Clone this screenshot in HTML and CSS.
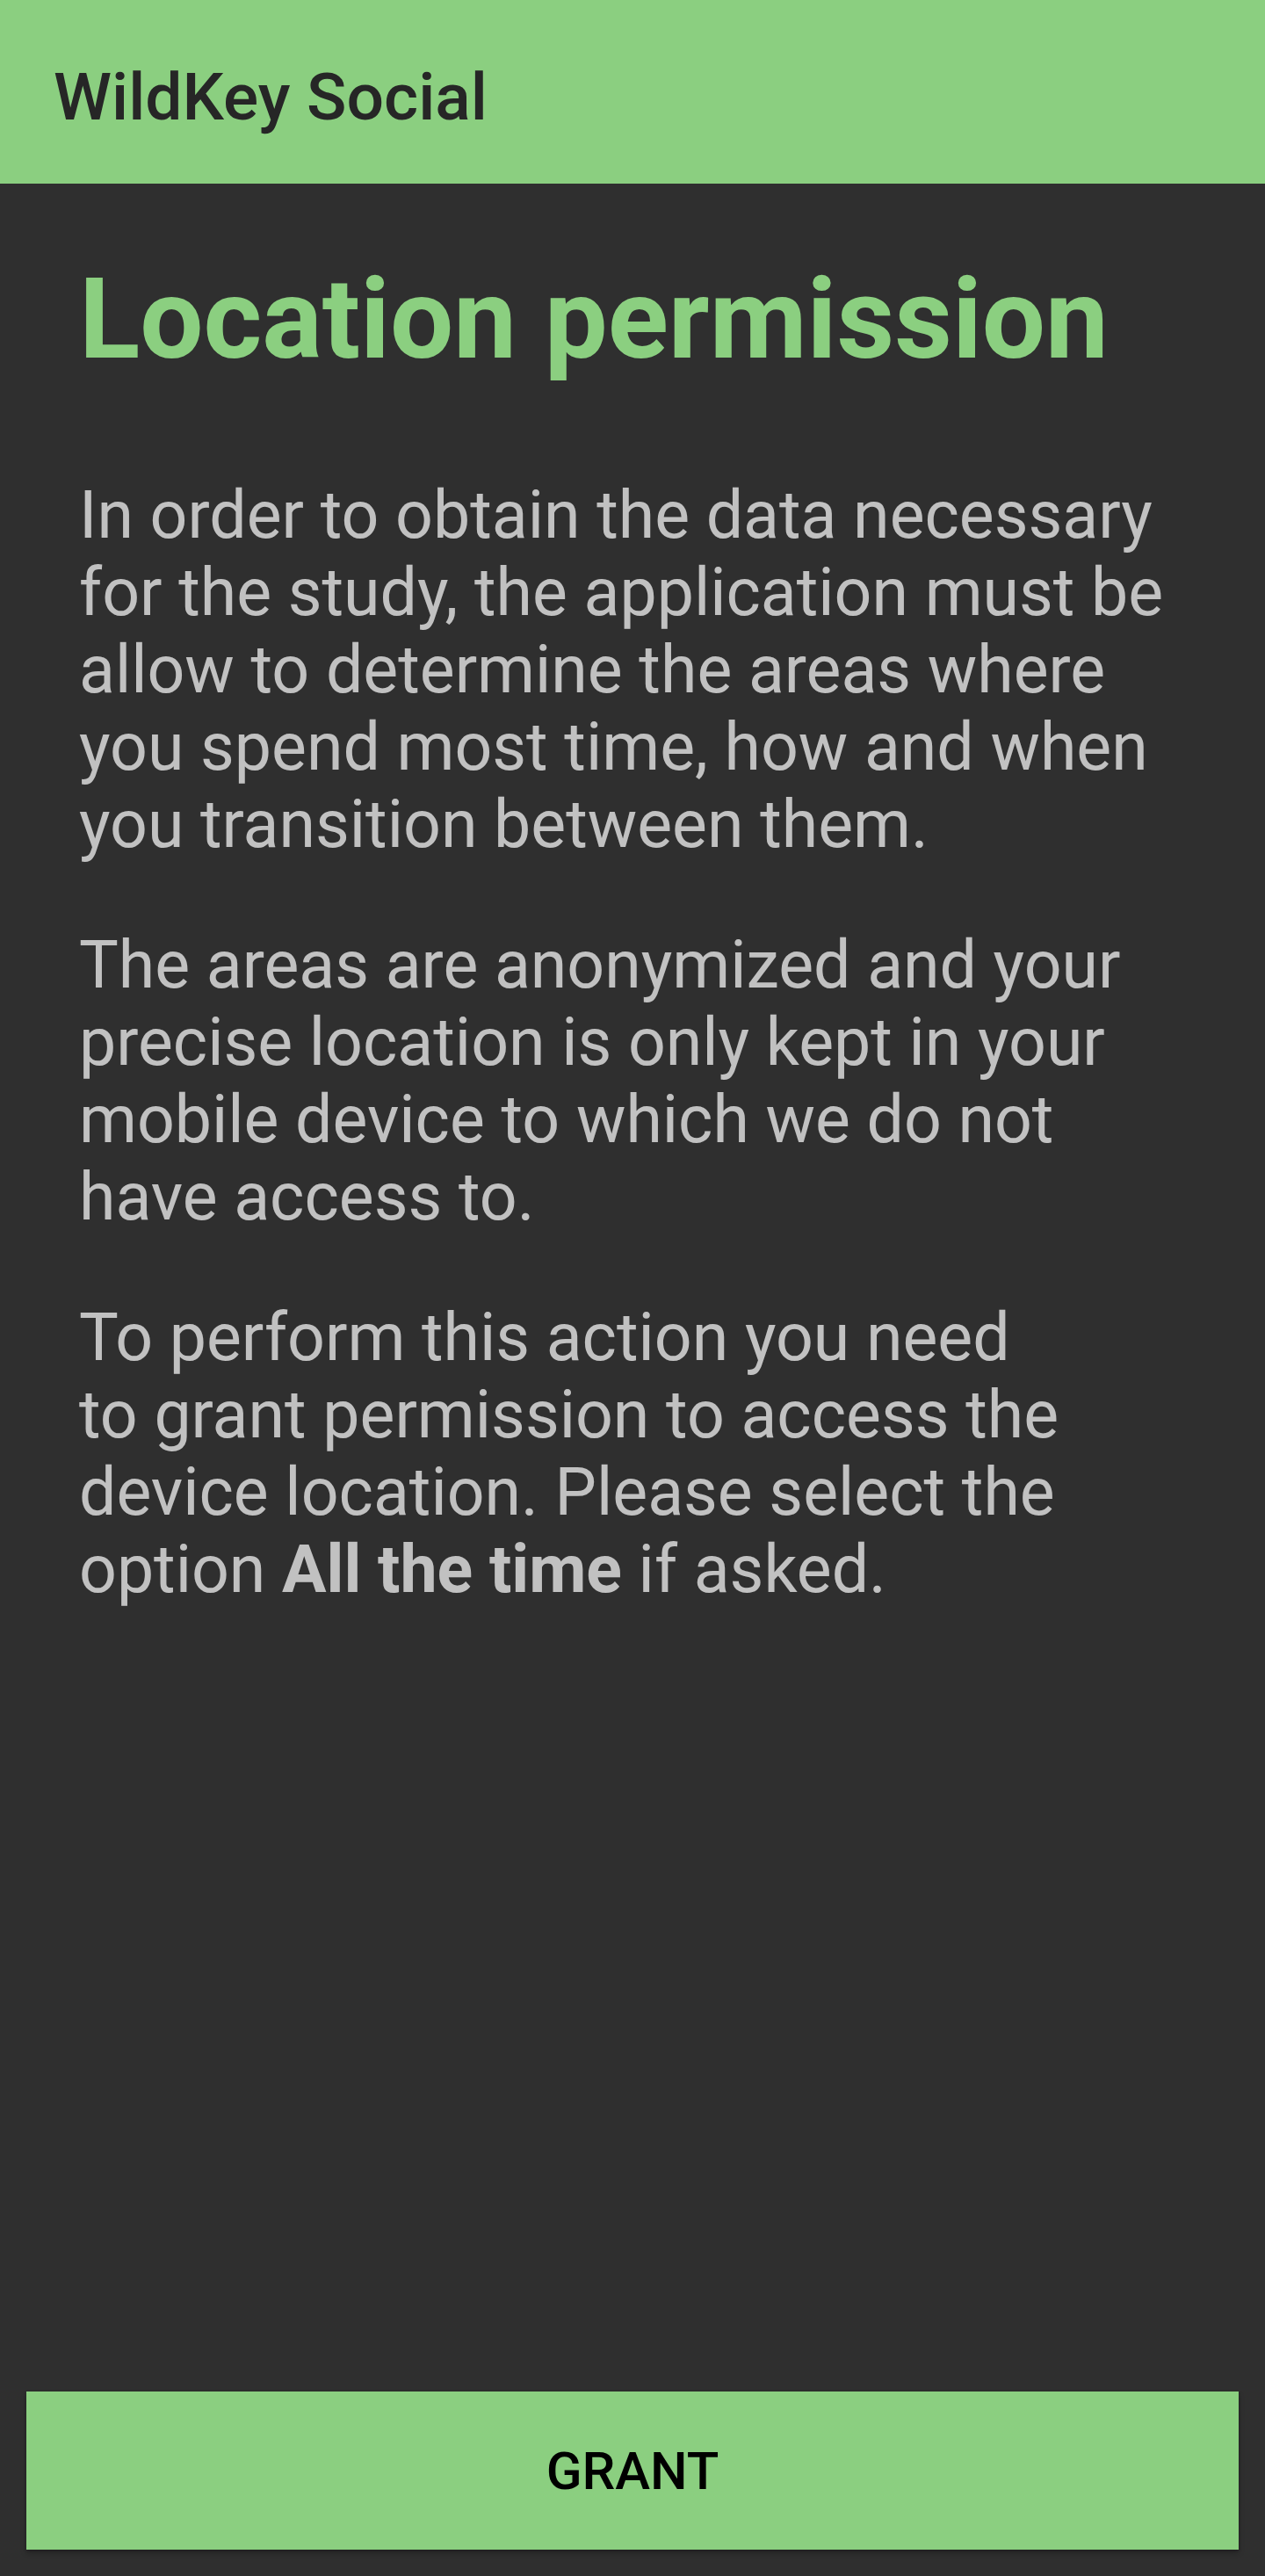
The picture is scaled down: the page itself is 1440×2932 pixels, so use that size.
FILE: index.html
```html
<!DOCTYPE html>
<html lang="en">
<head>
<meta charset="utf-8">
<title>WildKey Social</title>
<link rel="stylesheet" href="styles.css">
</head>
<body>
<div class="screen">
  <header class="toolbar">
    <h1 class="toolbar-title">WildKey Social</h1>
  </header>
  <main class="content">
    <h2 class="headline">Location permission</h2>
    <p class="para">In order to obtain the data necessary for the study, the application must be allow to determine the areas where you spend most time, how and when you transition between them.</p>
    <p class="para">The areas are anonymized and your precise location is only kept in your mobile device to which we do not have access to.</p>
    <p class="para">To perform this action you need<br>to grant permission to access the device location. Please select the option <strong>All the time</strong> if asked.</p>
  </main>
  <div class="footer">
    <button class="grant-btn" type="button">GRANT</button>
  </div>
</div>
</body>
</html>
```

FILE: styles.css
```css
* {
  box-sizing: border-box;
}

html, body {
  margin: 0;
  padding: 0;
  background: #2f2f2f;
}

body {
  font-family: Roboto, "Liberation Sans", sans-serif;
}

.screen {
  min-height: 100vh;
  display: flex;
  flex-direction: column;
  background: #2f2f2f;
}

.toolbar {
  height: 209px;
  background: #8bcf80;
  display: flex;
  align-items: center;
  padding: 10px 0 0 61px;
}

.toolbar-title {
  margin: 0;
  font-size: 75px;
  font-weight: 500;
  line-height: normal;
  color: #262626;
}

.content {
  flex: 1;
  padding: 79px 90px 0 90px;
}

.headline {
  margin: 0 0 104px 0;
  font-size: 128px;
  font-weight: 700;
  line-height: normal;
  color: #8bcf80;
}

.para {
  margin: 0 0 72px 0;
  font-size: 75.2px;
  line-height: 88px;
  font-weight: 400;
  color: rgba(255, 255, 255, 0.7);
}

.para strong {
  font-weight: 700;
}

.footer {
  padding: 0 30px 30px 30px;
}

.grant-btn {
  display: block;
  width: 100%;
  height: 180px;
  border: none;
  border-radius: 0;
  background: #8bcf80;
  color: #000;
  font-family: Roboto, "Liberation Sans", sans-serif;
  font-size: 60px;
  font-weight: 500;
  letter-spacing: 0;
  box-shadow: 0 4px 6px rgba(0, 0, 0, 0.25), 0 1px 3px rgba(0, 0, 0, 0.2);
  cursor: pointer;
}
```
